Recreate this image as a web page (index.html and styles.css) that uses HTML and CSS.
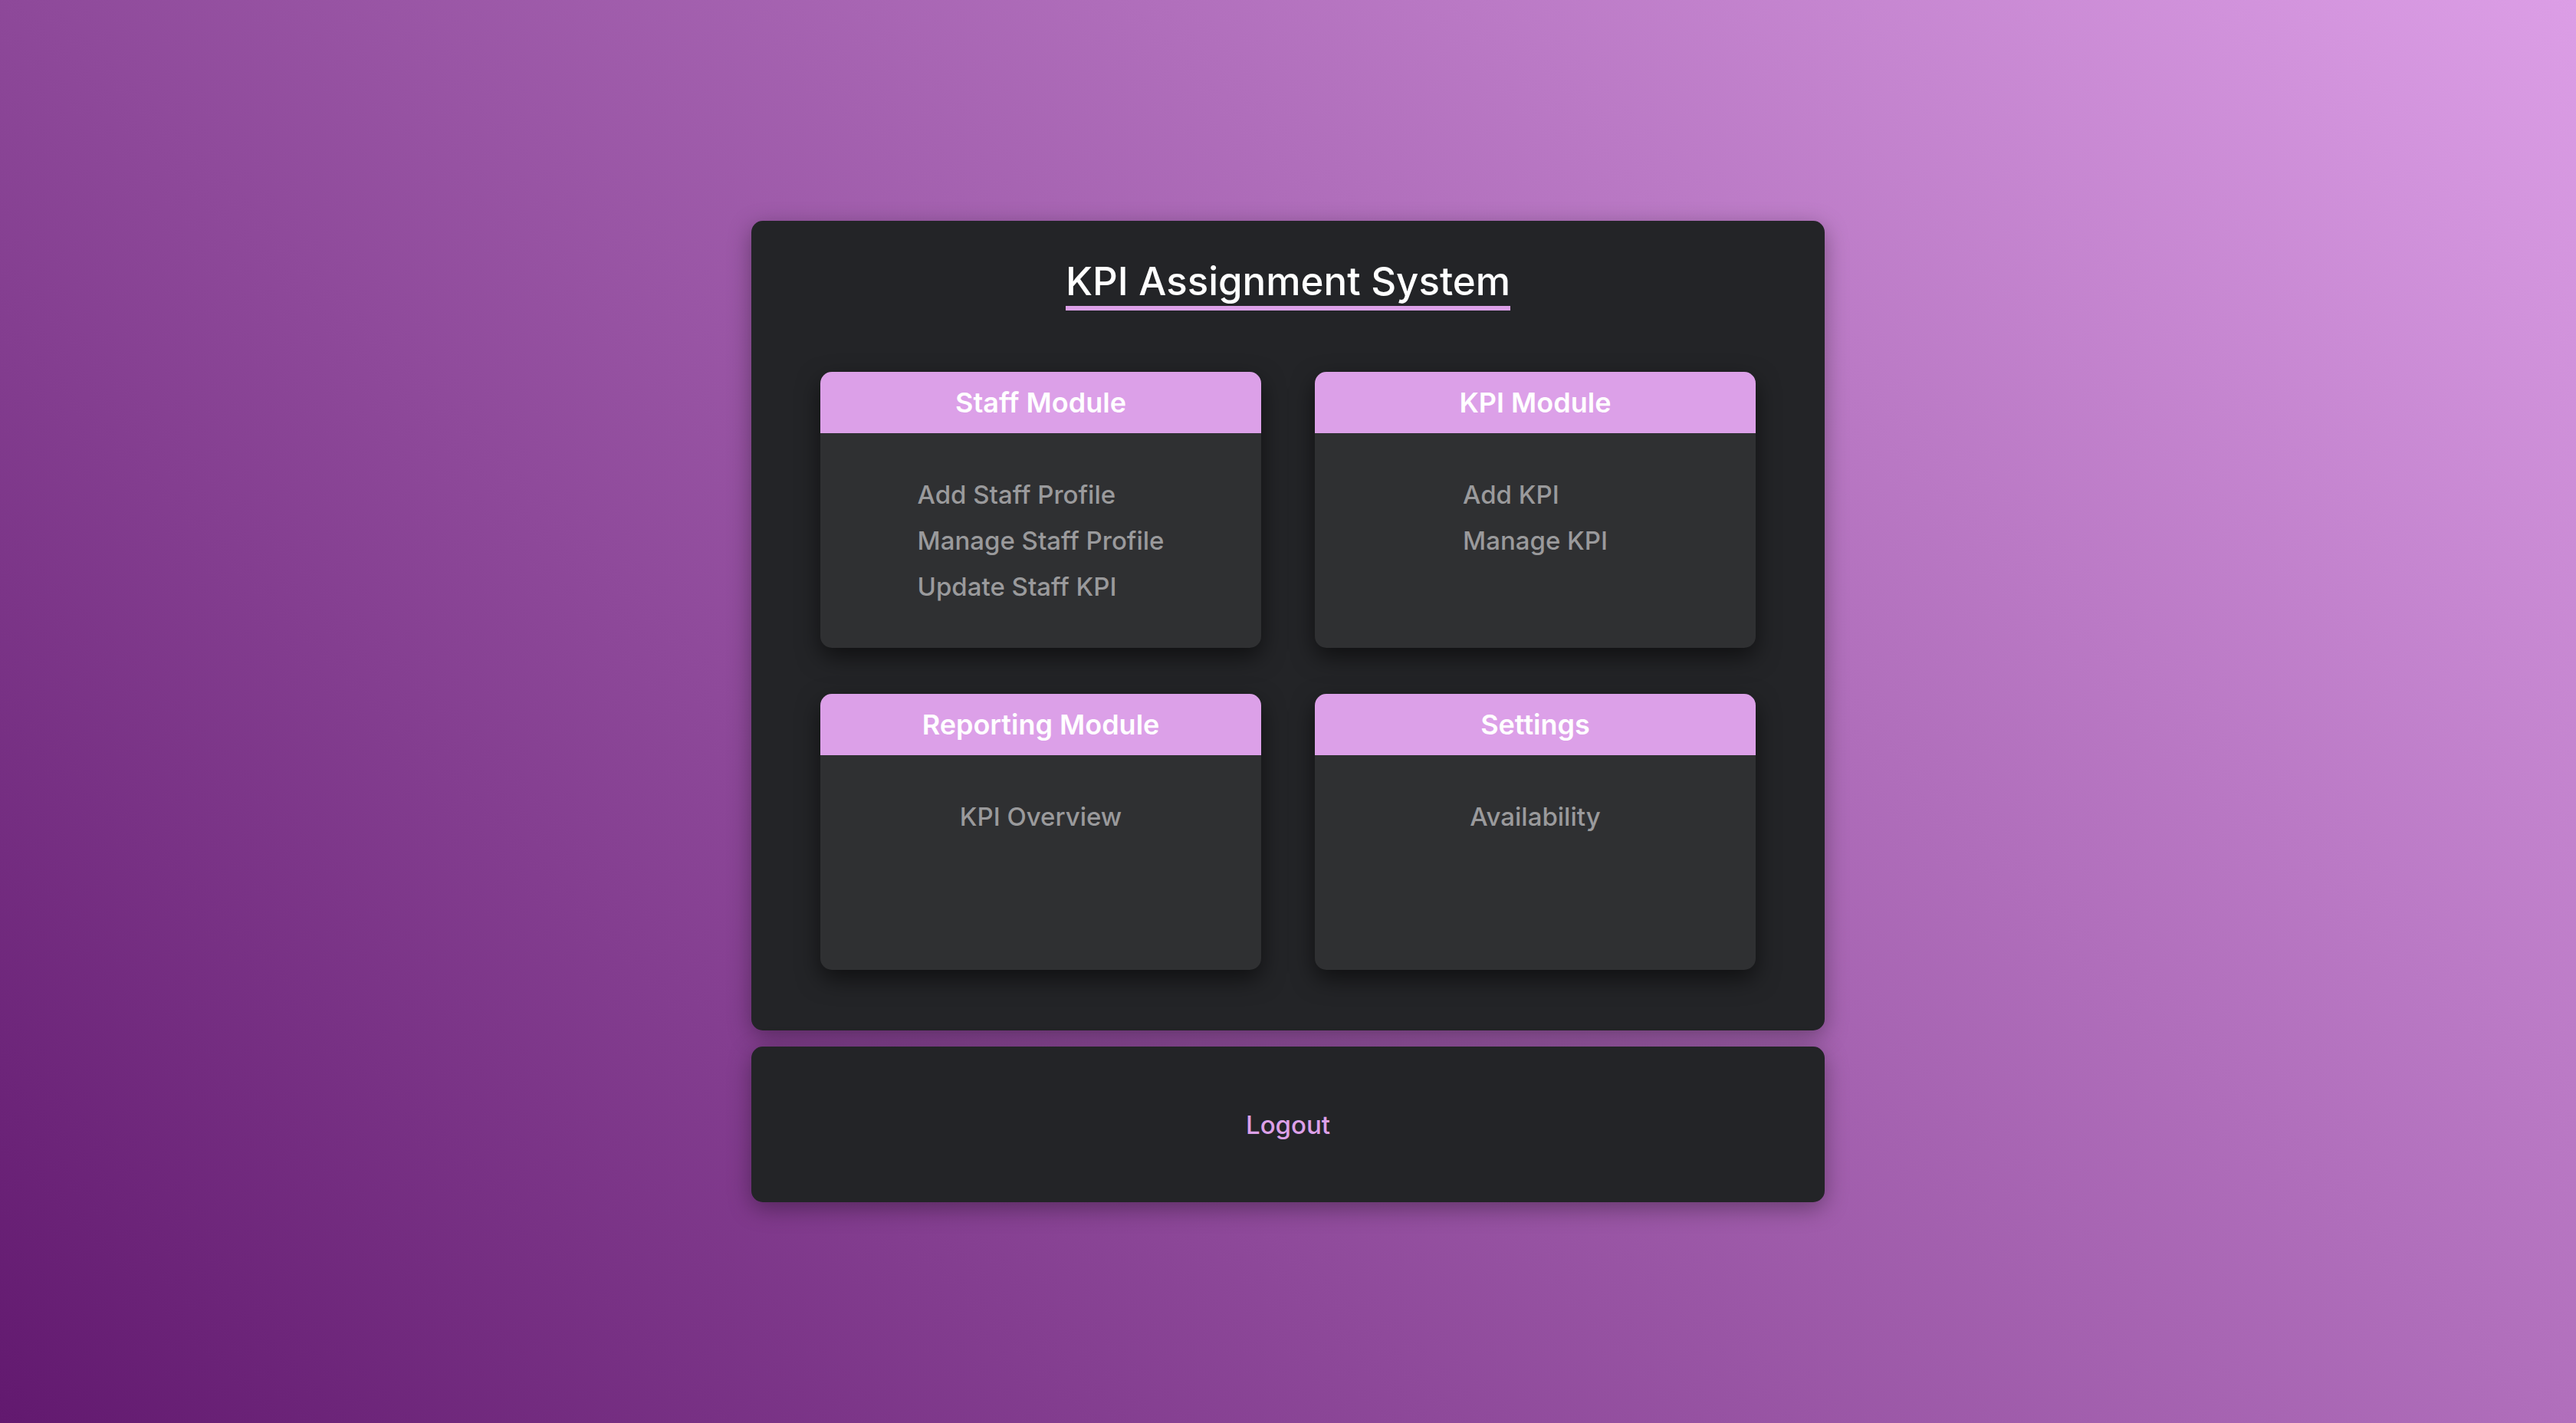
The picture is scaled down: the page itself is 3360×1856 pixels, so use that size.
FILE: index.html
```html
<!DOCTYPE html>
<html lang="en">
<head>
<meta charset="utf-8">
<title>KPI Assignment System</title>
<link rel="stylesheet" href="styles.css">
</head>
<body>
  <main class="page">
    <section class="panel">
      <div class="title-wrap">
        <h1 class="title">KPI Assignment System</h1>
      </div>
      <div class="modules">
        <div class="module">
          <div class="module-head">Staff Module</div>
          <div class="module-body">
            <ul class="links">
              <li>Add Staff Profile</li>
              <li>Manage Staff Profile</li>
              <li>Update Staff KPI</li>
            </ul>
          </div>
        </div>
        <div class="module">
          <div class="module-head">KPI Module</div>
          <div class="module-body">
            <ul class="links">
              <li>Add KPI</li>
              <li>Manage KPI</li>
            </ul>
          </div>
        </div>
        <div class="module">
          <div class="module-head">Reporting Module</div>
          <div class="module-body">
            <ul class="links">
              <li>KPI Overview</li>
            </ul>
          </div>
        </div>
        <div class="module">
          <div class="module-head">Settings</div>
          <div class="module-body">
            <ul class="links">
              <li>Availability</li>
            </ul>
          </div>
        </div>
      </div>
    </section>
    <section class="logout-panel">
      <span class="logout">Logout</span>
    </section>
  </main>
</body>
</html>
```
FILE: styles.css
```css
html, body {
  margin: 0;
  padding: 0;
}
body {
  min-height: 100vh;
  font-family: Inter, "Noto Sans", sans-serif;
  background: linear-gradient(45deg, #62196f 0%, #dc9ee6 100%);
}
.page {
  min-height: 100vh;
  display: flex;
  flex-direction: column;
  align-items: center;
  justify-content: center;
  gap: 21px;
}
.panel {
  box-sizing: border-box;
  width: 1400px;
  padding: 50px 90px 79px;
  background: #232427;
  border-radius: 15px;
  box-shadow: 0 8px 30px rgba(0, 0, 0, 0.35);
}
.title-wrap {
  text-align: center;
  margin-bottom: 80px;
}
.title {
  display: inline-block;
  margin: 0;
  font-size: 51px;
  font-weight: 500;
  line-height: 58px;
  color: #ffffff;
  padding-bottom: 3px;
  border-bottom: 6px solid #dca0e8;
}
.modules {
  display: grid;
  grid-template-columns: 1fr 1fr;
  column-gap: 70px;
  row-gap: 60px;
}
.module {
  height: 360px;
  background: #2f3032;
  border-radius: 15px;
  overflow: hidden;
  box-shadow: 0 12px 30px rgba(0, 0, 0, 0.55);
  display: flex;
  flex-direction: column;
}
.module-head {
  height: 80px;
  display: flex;
  align-items: center;
  justify-content: center;
  background: #dca0e8;
  color: #ffffff;
  font-size: 36px;
  font-weight: 600;
}
.module-body {
  padding-top: 50px;
  text-align: center;
}
.links {
  display: inline-block;
  margin: 0;
  padding: 0;
  list-style: none;
  text-align: left;
}
.links li {
  font-size: 33px;
  font-weight: 500;
  line-height: 60px;
  color: #9a9a9c;
}
.logout-panel {
  box-sizing: border-box;
  width: 1400px;
  height: 203px;
  display: flex;
  align-items: center;
  justify-content: center;
  background: #232427;
  border-radius: 15px;
  box-shadow: 0 8px 30px rgba(0, 0, 0, 0.35);
}
.logout {
  font-size: 33px;
  font-weight: 500;
  color: #dca0e8;
}
```
